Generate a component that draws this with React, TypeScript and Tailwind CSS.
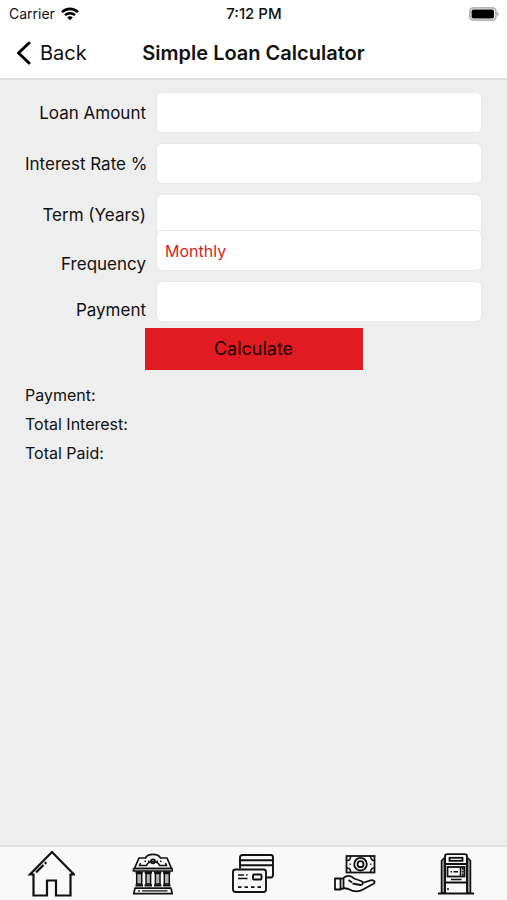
import { useState } from "react";
import type { ReactNode } from "react";

type RowProps = {
  id: string;
  label: string;
  className?: string;
  labelClassName?: string;
  children: ReactNode;
};

const fieldClass =
  "block w-full h-[41px] px-2 rounded-md border border-[#e8e8e8] bg-white text-base outline-none";

function Row({ id, label, className, labelClassName, children }: RowProps) {
  return (
    <div
      className={`grid grid-cols-[121px_1fr] gap-[10px] items-start ${
        className || ""
      }`.trim()}
    >
      <label
        htmlFor={id}
        className={`text-right whitespace-nowrap text-[17px] ${
          labelClassName || "leading-[42px]"
        }`}
      >
        {label}
      </label>
      {children}
    </div>
  );
}

function StatusBar() {
  return (
    <div className="grid grid-cols-3 items-center h-7 pl-[9px] pr-2 text-sm">
      <div className="flex items-center gap-1.5">
        <span>Carrier</span>
        <svg width="18" height="14" viewBox="0 0 18 14" fill="none" stroke="#000">
          <path d="M1 5.2C5.5.7 12.5.7 17 5.2" strokeWidth="2.6" />
          <path d="M4 8.2c2.800-2.700 7.200-2.700 10 0" strokeWidth="2.4" />
          <path d="M6.200 10.400c1.600-1.500 4-1.500 5.600 0L9 13.300z" fill="#000" stroke="none" />
        </svg>
      </div>
      <span className="text-center font-medium text-[15px]">7:12 PM</span>
      <svg className="justify-self-end" width="30" height="14" viewBox="0 0 30 14">
        <rect x="0.9" y="0.9" width="26" height="12.2" rx="3.5" fill="#fff" stroke="#b5b5b5" strokeWidth="1.8" />
        <rect x="2.6" y="2.5" width="22.4" height="9" rx="1.8" fill="#000" />
        <path d="M28 4.800c2.400.8 2.400 3.600 0 4.400z" fill="#b5b5b5" />
      </svg>
    </div>
  );
}

function Header() {
  return (
    <header className="bg-white border-b-2 border-[#e0e0e0]">
      <StatusBar />
      <div className="grid grid-cols-[1fr_auto_1fr] items-center h-[50px] px-4">
        <button type="button" className="flex items-center gap-2 text-xl justify-self-start">
          <svg width="16" height="24" viewBox="0 0 16 24" fill="none" stroke="#000" strokeWidth="3">
            <path d="M13 2 2.500 12 13 22" strokeLinejoin="round" strokeLinecap="round" />
          </svg>
          Back
        </button>
        <h1 className="text-xl font-semibold">Simple Loan Calculator</h1>
      </div>
    </header>
  );
}

function HomeIcon() {
  return (
    <svg width="48" height="48" viewBox="0 0 48 48" fill="none" stroke="#111" strokeWidth="2.2">
      <path d="M6.500 24.500V45.500H20V30.500h9v15H43.500V24.500H47L25 2 3 24.500z" />
      <path d="M9 22.500 16.500 15M17.800 13.700l1.500-1.500" />
    </svg>
  );
}

function BankIcon() {
  return (
    <svg width="42" height="42" viewBox="0 0 42 42" fill="none" stroke="#111" strokeWidth="1.7">
      <path d="M14.500 5C17 .2 27 .2 29.500 5H36l4.500 10.500H3.500L8 5z" strokeLinejoin="round" />
      <path d="M9.500 10 8.500 12.500h7c2-5.500 11-5.500 13 0h7L34.500 10" strokeWidth="1.5" />
      <path d="M13.500 8.300H15M17 8.300h1.500M25.500 8.300H27M29 8.300h1.500" strokeWidth="1.4" />
      <circle cx="22" cy="8.3" r="2" />
      <path d="M2.500 15.500h39M2.500 15.500v2.500h39v-2.500" />
      <g fill="#b5b5b5" strokeWidth="1.5">
        <path d="M5.700 20.500h5v10.500h-5zM15 20.500h4.600v10.500H15zM24.400 20.500H29v10.500h-4.600zM33.300 20.500h5v10.500h-5z" />
      </g>
      <path d="M4.500 19.300H12M13.600 19.300H21M23 19.300h7.400M32 19.300h7.500M4.500 32.300H12M13.600 32.300H21M23 32.300h7.400M32 32.300h7.500" strokeWidth="2.2" />
      <path d="M4 35.200h36l1.300 5.500H2.700z" strokeLinejoin="round" />
      <path d="M7 37.900h2M11 37.900h25.500" strokeWidth="1.3" />
    </svg>
  );
}

function CardsIcon() {
  return (
    <svg width="42" height="40" viewBox="0 0 42 40" fill="none" stroke="#111" strokeWidth="1.9">
      <path d="M8 14.500V3.500C8 2 8.800 1 10.500 1H39c1.500 0 2 1 2 2.500V21c0 1.700-.7 2.500-2.500 2.500H35" />
      <path d="M8 6.300h33M8 11.300h33" />
      <rect x="1" y="15.5" width="33" height="22.5" rx="2.5" />
      <rect x="21" y="20.5" width="8.5" height="5" rx="1" />
      <path d="M6 21h6M14 21h1.500M6 24.500h9.500M6 33.200h3.500M12.500 33.200H16M19 33.200h3.500M25.500 33.200H29" strokeWidth="1.7" />
    </svg>
  );
}

function HandMoneyIcon() {
  return (
    <svg width="42" height="40" viewBox="0 0 42 40" fill="none" stroke="#111" strokeWidth="1.8">
      <rect x="12.5" y="2" width="28" height="16.5" />
      <circle cx="26.5" cy="10.2" r="6.3" />
      <circle cx="26.5" cy="10.2" r="3" />
      <path d="M13 6.500c2.500 0 3.700-2 3.700-4.500M40.300 6.500c-2.500 0-3.700-2-3.700-4.500M13 14c2.500 0 3.700 2 3.700 4.500M40.300 14c-2.500 0-3.700 2-3.700 4.500M15.500 10.200h1.200M36.300 10.200h1.200" strokeWidth="1.5" />
      <path d="M1 24.500h5.500v11H1zM6.500 25l3-1v10.500l-3 .5M9.500 24c3.500-3.500 8-2.500 10.500.5l7 2.500c2.800 1 2 4-.5 4l-8-1.500M28.500 29l8-2.700c4-.8 5.500 2 2.500 3.700L29 35.500c-5 3-11 1.500-14.500-.5l-5-1M14.500 26l3.500 2.500" strokeLinejoin="round" />
    </svg>
  );
}

function AtmIcon() {
  return (
    <svg width="38" height="42" viewBox="0 0 38 42" fill="none" stroke="#111" strokeWidth="1.8">
      <path d="M4.500 40V7.500L8 4.500V40zM33.500 40V7.500L30 4.500V40z" fill="#8c8c8c" strokeWidth="1.5" />
      <path d="M8 40V3.500C8 2 9 1.200 10.500 1.200h17C29 1.200 30 2 30 3.500V40" />
      <rect x="12.5" y="4.8" width="13" height="3" />
      <path d="M8 11h22M8 29.500h22" />
      <rect x="10.5" y="14" width="17" height="9.5" />
      <path d="M23.500 14v9.500" strokeWidth="1.5" />
      <path d="M25.700 15v8" strokeWidth="2" strokeDasharray="1.8 1" />
      <path d="M13.500 18.800H15M16.500 18.800h4.500M14 26.500h10.500M10 36h2" strokeWidth="1.5" />
      <path d="M1 40.500h36" />
    </svg>
  );
}

const tabs = [
  { name: "Home", Icon: HomeIcon },
  { name: "Accounts", Icon: BankIcon },
  { name: "Cards", Icon: CardsIcon },
  { name: "Loans", Icon: HandMoneyIcon },
  { name: "ATM", Icon: AtmIcon },
];

export default function App() {
  const [frequency, setFrequency] = useState("Monthly");

  return (
    <div className="min-h-screen flex flex-col bg-[#eeeeee] text-[#111111] font-['Inter',sans-serif]">
      <Header />

      <main className="grow px-[25px] pt-3">
        <form onSubmit={(e) => e.preventDefault()}>
          <div className="flex flex-col gap-[9px]">
            <Row id="amount" label="Loan Amount">
              <input id="amount" type="text" inputMode="decimal" className={fieldClass} />
            </Row>
            <Row id="rate" label="Interest Rate %">
              <input id="rate" type="text" inputMode="decimal" className={fieldClass} />
            </Row>
            <Row id="term" label="Term (Years)">
              <input id="term" type="text" inputMode="numeric" className={fieldClass} />
            </Row>
          </div>
          {/* the picker overlaps the bottom of the term field */}
          <Row id="frequency" label="Frequency" className="-mt-[6px]" labelClassName="pt-[22px] leading-6">
            <select
              id="frequency"
              value={frequency}
              onChange={(e) => setFrequency(e.target.value)}
              className={`${fieldClass} appearance-none text-[#e01b22]`}
            >
              <option>Monthly</option>
              <option>Quarterly</option>
              <option>Annually</option>
            </select>
          </Row>
          <Row id="payment" label="Payment" className="mt-[5px]" labelClassName="pt-[17px] leading-6">
            <input id="payment" type="text" inputMode="decimal" className={fieldClass} />
          </Row>
          <button
            type="submit"
            className="block w-[218px] h-[42px] mx-auto mt-[6px] bg-[#e01b22] text-lg text-[#220000]"
          >
            Calculate
          </button>
        </form>

        <div className="mt-[11px] text-base leading-[29px]">
          <p>Payment:</p>
          <p>Total Interest:</p>
          <p>Total Paid:</p>
        </div>
      </main>

      <nav className="grid grid-cols-5 h-[55px] border-t-2 border-[#e0e0e0] bg-[#f9f9f9]">
        {tabs.map(({ name, Icon }) => (
          <a key={name} href="#" aria-label={name} className="flex items-center justify-center">
            <Icon />
          </a>
        ))}
      </nav>
    </div>
  );
}
